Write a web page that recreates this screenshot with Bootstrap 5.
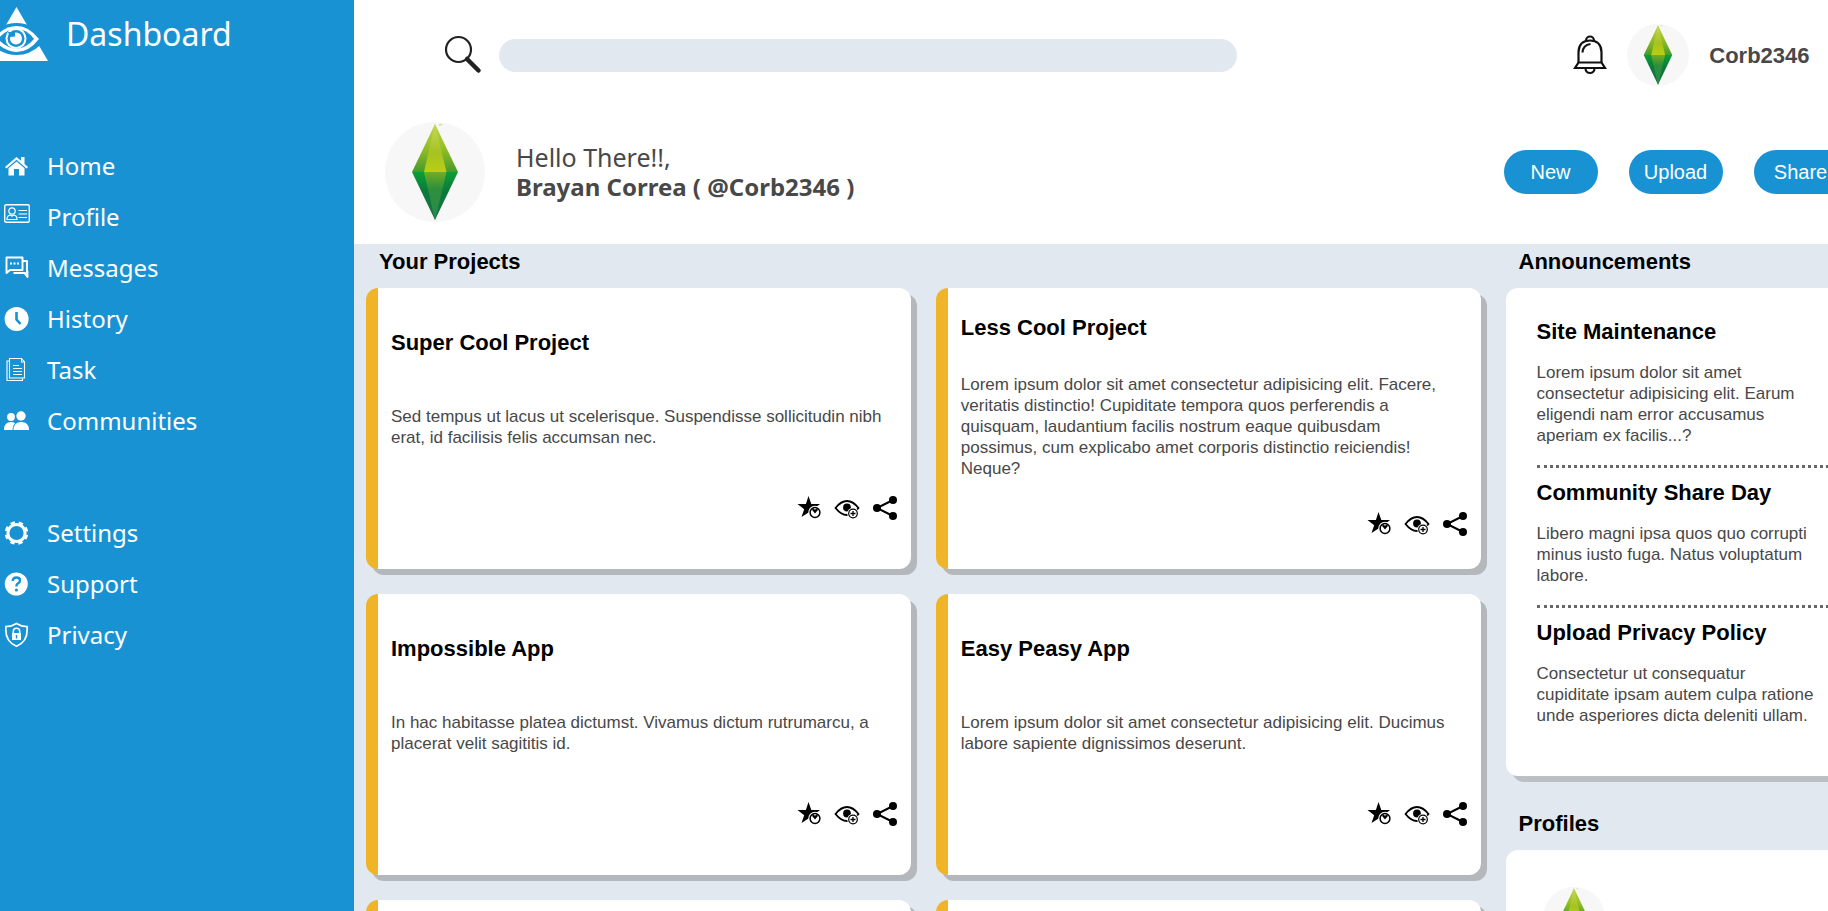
<!DOCTYPE html>
<html lang="en">
<head>
<meta charset="utf-8">
<meta name="viewport" content="width=device-width, initial-scale=1">
<title>Dashboard</title>
<link href="https://cdn.jsdelivr.net/npm/bootstrap@5.3.0/dist/css/bootstrap.min.css" rel="stylesheet">
<style>
:root { --brand: #1992d4; --page: #e1e8ef; --accent: #f0b429; --ink: #484848; }
body { font-family: "Liberation Sans", Arial, sans-serif; font-size: 17px; line-height: 21px; color: var(--ink); background: var(--page); }
h2, h3 { font-size: 22px; line-height: 25px; font-weight: 700; color: #000; margin: 0; }
.shell { width: 102%; }
.sidebar { flex: 0 0 354px; background: var(--brand); font-family: "Noto Sans", sans-serif; }
.sidebar a { color: #fff; text-decoration: none; }
.brand { padding-top: 7px; gap: 18px; font-size: 32px; line-height: 54px; }
.brand svg { width: 64px; height: 54px; margin-left: -16px; }
.menu { margin-top: 79px; font-size: 24px; }
.menu + .menu { margin-top: 61px; }
.menu a { height: 51px; padding-left: 4px; gap: 17px; }
.menu svg { width: 26px; height: 26px; }
.topline { height: 110px; padding-left: 89px; padding-right: 55px; }
.topline .glass { width: 40px; height: 40px; margin-right: 16px; }
.search-box { width: 54%; height: 33px; border-radius: 17px; background: var(--page); border: 0; }
.search-box:focus { background: var(--page); }
.bell { width: 34px; height: 40px; }
.user-name { font-size: 22px; line-height: 25px; }
.avatar { width: 62px; height: 62px; }
.avatar-lg { width: 100px; height: 100px; }
.hello { height: 134px; padding: 0 17px 10px 31px; }
.greeting { margin-left: 31px; line-height: 29px; font-size: 24px; font-family: "Noto Sans", sans-serif; }
.greeting .hi { font-size: 25px; }
.actions { gap: 31px; }
.pill { width: 94px; height: 44px; padding: 0; border: 0; border-radius: 22px; background: var(--brand); color: #fff; font-size: 20px; }
.pill:hover { background: #127fbf; color: #fff; }
.content { padding: 0 12px; gap: 25px; }
.section-title { height: 44px; padding: 5px 13px 0; }
.projects { display: grid; grid-template-columns: 1fr 1fr; grid-auto-rows: 281px; gap: 25px; }
.panel { background: #fff; border-radius: 12px; box-shadow: 6px 6px 0 #bcc0c5; }
.project { border-left: 12px solid var(--accent); padding: 0 13px; box-shadow: 6px 6px 0 #b4b7bb; }
.project h3 { margin-bottom: 8px; }
.project p { padding-right: 10px; }
.tools { height: 37px; gap: 12px; }
.tools svg { width: 26px; height: 26px; display: block; }
.rail { flex: 0 0 347px; }
.news { padding: 31px; }
.news p { margin: 18px 0 0; padding-bottom: 19px; max-width: 280px; }
.news article + article { border-top: 3px dotted #666; padding-top: 12px; }
.news article { margin-right: -20px; }
.people { padding: 37px; }
.people-title { margin-top: 30px; }
</style>
</head>
<body>
<svg width="0" height="0" class="position-absolute" aria-hidden="true">
  <defs>
    <linearGradient id="g-top" x1="0" y1="0" x2="0" y2="1"><stop offset="0" stop-color="#c3d53c"/><stop offset=".55" stop-color="#8fbb25"/><stop offset="1" stop-color="#459a2c"/></linearGradient>
    <linearGradient id="g-mid" x1="0" y1="0" x2="0" y2="1"><stop offset="0" stop-color="#c8d75f"/><stop offset=".6" stop-color="#a5c321"/><stop offset="1" stop-color="#b9cf14"/></linearGradient>
    <linearGradient id="g-low" x1="0" y1="0" x2="0" y2="1"><stop offset="0" stop-color="#0a9f38"/><stop offset=".4" stop-color="#0b7a3b"/><stop offset="1" stop-color="#177348"/></linearGradient>
    <linearGradient id="g-low-mid" x1="0" y1="0" x2="0" y2="1"><stop offset="0" stop-color="#72ad22"/><stop offset=".35" stop-color="#2d8f3c"/><stop offset="1" stop-color="#29894f"/></linearGradient>
  </defs>
  <symbol id="gem" viewBox="0 0 100 100">
    <circle cx="50" cy="50" r="50" fill="#f7f7f7"/>
    <path d="M50 2 73 50H27Z" fill="url(#g-top)"/>
    <path d="M50 2 61.500 50H39Z" fill="url(#g-mid)"/>
    <path d="M27 50H73L50 98Z" fill="url(#g-low)"/>
    <path d="M39 50H61.500L50 98Z" fill="url(#g-low-mid)"/>
    <path d="M54 3q2-1 3 0" stroke="#d5de8a" stroke-width="1.500" fill="none"/>
  </symbol>
  <symbol id="star" viewBox="0 0 26 26">
    <path d="M12.500 1 15.300 9H24L17 14.500 19.500 22 12.500 17.500 5.500 22 8.200 14.300 1.500 9H9.900Z"/>
    <circle cx="19" cy="17.500" r="6.700" fill="#fff"/>
    <circle cx="19" cy="17.500" r="4.900" fill="none" stroke="#000" stroke-width="1.500"/>
    <path d="M19 18.500 16.300 15.300V13.500h1.600L19 15 20.100 13.500h1.600v1.800Z"/>
  </symbol>
  <symbol id="watch" viewBox="0 0 26 26">
    <path d="M1.500 13Q7 6 13 6T24.500 13Q19 20 13 20T1.500 13Z" fill="none" stroke="#000" stroke-width="1.800"/>
    <circle cx="13" cy="12.500" r="3.900"/>
    <circle cx="19" cy="18.500" r="5.800" fill="#fff"/>
    <circle cx="19" cy="18.500" r="4.300" fill="none" stroke="#000" stroke-width="1.200"/>
    <path d="M19 16v5M16.500 18.500h5" stroke="#000" stroke-width="1.300"/>
  </symbol>
  <symbol id="share" viewBox="0 0 26 26">
    <path d="M21 5 5 13 21 21" fill="none" stroke="#000" stroke-width="2"/>
    <circle cx="5" cy="13" r="4"/><circle cx="21" cy="5" r="4"/><circle cx="21" cy="21" r="4"/>
  </symbol>
</svg>

<div class="vh-100 overflow-hidden">
<div class="shell d-flex min-vh-100">
  <nav class="sidebar" aria-label="Main">
    <a href="#" class="brand d-flex align-items-center">
      <svg viewBox="0 0 64 54" fill="#fff" aria-hidden="true">
        <path d="M32.500 0 64 54H1Z"/>
        <path d="M2 32Q15 16 32.500 16T62 32L56.500 38Q46 48 32.500 48T8 38Z" fill="#1992d4"/>
        <path d="M9 32Q20 19 32.500 19T55 32Q45 45 32.500 45T9 32Z"/>
        <path d="M14 32Q22 22 32.500 22T50 32Q42 41.500 32.500 41.500T14 32Z" fill="#1992d4"/>
        <circle cx="32" cy="31.500" r="10.500"/>
        <circle cx="32" cy="31.500" r="8.500" fill="#1992d4"/>
        <circle cx="32" cy="31.500" r="6"/>
        <path d="M24 25h7v4.500l-5 .5Z" fill="#1992d4"/>
      </svg>
      <span>Dashboard</span>
    </a>
    <div class="menu">
      <a href="#" class="d-flex align-items-center"><svg viewBox="0 0 26 26" fill="#fff"><path d="M12.500 4 1 14l1.500 1.500 10-8.700 10 8.700L24 14l-3.500-3V4H17v3.800Z"/><path d="M12.500 8.500 4.500 15.300V22.500H10V16h5v6.500h5.500V15.300Z"/></svg>Home</a>
      <a href="#" class="d-flex align-items-center"><svg class="overflow-visible" viewBox="0 0 26 26" fill="none" stroke="#fff"><rect x=".7" y=".7" width="24.600" height="17.500" rx="1.500" stroke-width="1.400"/><circle cx="8" cy="7" r="3.200" stroke-width="1.200"/><path d="M3 15.500q0-4 3-4.500l2 1 2-1q3 .5 3 4.500Z" stroke-width="1.200"/><path d="M14.500 6.500h8.500M14.500 10h8.500M14.500 13.500h8.500"/></svg>Profile</a>
      <a href="#" class="d-flex align-items-center"><svg viewBox="0 0 26 26" fill="none" stroke="#fff" stroke-width="1.900" stroke-linejoin="round"><path d="M2.500 2.500h16v12.500H6L2.500 18Z"/><path d="M18.500 6h4.500V20.500L20.500 18H9.500"/><path d="M20.500 17.500 23.500 22v-6"/><path d="M6 8.500h2M9.500 8.500h2M13 8.500h2"/></svg>Messages</a>
      <a href="#" class="d-flex align-items-center"><svg viewBox="0 0 26 26" fill="#fff"><circle cx="12.600" cy="13" r="12"/><path d="M12.500 6v7.500l4 4.500" fill="none" stroke="#1992d4" stroke-width="2.600"/></svg>History</a>
      <a href="#" class="d-flex align-items-center"><svg viewBox="0 0 26 26" fill="none" stroke="#fff" stroke-width="1.100"><path d="M5.500 1.500h12l3 3.500V21h-15Z"/><path d="M17.500 1.500V5h3" /><path d="M5 4H3v19.500h15.500V21.500"/><path d="M9 8.500h6M9 11.500h9M9 14.500h9M9 17.500h9"/></svg>Task</a>
      <a href="#" class="d-flex align-items-center"><svg viewBox="0 0 26 26" fill="#fff"><circle cx="7" cy="9" r="3.900"/><circle cx="17" cy="8" r="4.700"/><path d="M0 22q0-8 7-8 2.500 0 4 1.300Q8.500 17.500 8.500 22Z"/><path d="M9.500 22q0-8 7.700-8T25 22Z"/></svg>Communities</a>
    </div>
    <div class="menu">
      <a href="#" class="d-flex align-items-center"><svg viewBox="0 0 26 26" fill="none" stroke="#fff"><circle cx="12.500" cy="13" r="8.600" stroke-width="3"/><circle cx="12.500" cy="13" r="10.500" stroke-width="2.600" stroke-dasharray="4.400 3.847" stroke-dashoffset="-1.900"/></svg>Settings</a>
      <a href="#" class="d-flex align-items-center"><svg viewBox="0 0 26 26"><circle cx="12.300" cy="13" r="11.500" fill="#fff"/><path d="M8.800 10q0-3.500 3.600-3.500t3.600 3q0 1.700-1.900 2.800T12.400 15.500" fill="none" stroke="#1992d4" stroke-width="2.400"/><circle cx="12.400" cy="19" r="1.600" fill="#1992d4"/></svg>Support</a>
      <a href="#" class="d-flex align-items-center"><svg viewBox="0 0 26 26" fill="none" stroke="#fff"><path d="M12.500 1.500Q17.500 4.700 23 4.500 24.500 19.500 12.500 24.200.5 19.500 2 4.500 7.500 4.700 12.500 1.500Z" stroke-width="1.700"/><path d="M9.300 11.500V9.500a3.200 3.200 0 0 1 6.400 0v2" stroke-width="1.500"/><rect x="8" y="11" width="9" height="7" fill="#fff" stroke="none"/><path d="M12.500 13v3.500" stroke="#1992d4" stroke-width="1.400"/></svg>Privacy</a>
    </div>
  </nav>

  <main class="flex-grow-1">
    <header class="bg-white">
      <div class="topline d-flex align-items-center">
        <label for="q" class="d-flex"><svg class="glass" viewBox="0 0 40 40" fill="none" stroke="#222" role="img" aria-label="Search"><circle cx="15.500" cy="14.500" r="12.500" stroke-width="2.200"/><path d="M24 24 35.500 35.500" stroke-width="4.500" stroke-linecap="round"/></svg></label>
        <input id="q" type="search" class="search-box form-control">
        <div class="d-flex align-items-center ms-auto">
          <svg class="bell me-3" viewBox="0 0 34 40" fill="none" stroke="#111" stroke-width="2.200" role="img" aria-label="Notifications"><path d="M13 5.500a4 4 0 0 1 8 0"/><path d="M5.500 27.500V17Q6 5.500 17 5.500T28.500 17V27.500"/><path d="M5.500 27.500H28.500L32 33H2Z"/><path d="M12.500 33.500a4.500 4.500 0 0 0 9 0"/><path d="M9.500 17.500q.5-7.500 8-8.500"/></svg>
          <svg class="avatar ms-1" role="img" aria-label="Avatar"><use href="#gem"/></svg>
          <strong class="user-name ms-3 ps-1">Corb2346</strong>
        </div>
      </div>
      <div class="hello d-flex align-items-center">
        <svg class="avatar-lg" role="img" aria-label="Avatar"><use href="#gem"/></svg>
        <div class="greeting"><div class="hi">Hello There!!,</div><strong>Brayan Correa ( @Corb2346 )</strong></div>
        <div class="actions d-flex ms-auto">
          <button type="button" class="btn pill">New</button>
          <button type="button" class="btn pill">Upload</button>
          <button type="button" class="btn pill">Share</button>
        </div>
      </div>
    </header>

    <div class="content d-flex align-items-start">
      <section class="flex-grow-1">
        <h2 class="section-title">Your Projects</h2>
        <div class="projects">
          <article class="panel project d-flex flex-column justify-content-evenly">
            <h3>Super Cool Project</h3>
            <p class="m-0">Sed tempus ut lacus ut scelerisque. Suspendisse sollicitudin nibh erat, id facilisis felis accumsan nec.</p>
            <div class="tools d-flex align-items-center justify-content-end"><svg><use href="#star"/></svg><svg><use href="#watch"/></svg><svg><use href="#share"/></svg></div>
          </article>
          <article class="panel project d-flex flex-column justify-content-evenly">
            <h3>Less Cool Project</h3>
            <p class="m-0">Lorem ipsum dolor sit amet consectetur adipisicing elit. Facere, veritatis distinctio! Cupiditate tempora quos perferendis a quisquam, laudantium facilis nostrum eaque quibusdam possimus, cum explicabo amet corporis distinctio reiciendis! Neque?</p>
            <div class="tools d-flex align-items-center justify-content-end"><svg><use href="#star"/></svg><svg><use href="#watch"/></svg><svg><use href="#share"/></svg></div>
          </article>
          <article class="panel project d-flex flex-column justify-content-evenly">
            <h3>Impossible App</h3>
            <p class="m-0">In hac habitasse platea dictumst. Vivamus dictum rutrumarcu, a placerat velit sagititis id.</p>
            <div class="tools d-flex align-items-center justify-content-end"><svg><use href="#star"/></svg><svg><use href="#watch"/></svg><svg><use href="#share"/></svg></div>
          </article>
          <article class="panel project d-flex flex-column justify-content-evenly">
            <h3>Easy Peasy App</h3>
            <p class="m-0">Lorem ipsum dolor sit amet consectetur adipisicing elit. Ducimus labore sapiente dignissimos deserunt.</p>
            <div class="tools d-flex align-items-center justify-content-end"><svg><use href="#star"/></svg><svg><use href="#watch"/></svg><svg><use href="#share"/></svg></div>
          </article>
          <article class="panel project"></article>
          <article class="panel project"></article>
        </div>
      </section>

      <aside class="rail">
        <h2 class="section-title">Announcements</h2>
        <div class="panel news">
          <article><h3>Site Maintenance</h3><p>Lorem ipsum dolor sit amet consectetur adipisicing elit. Earum eligendi nam error accusamus aperiam ex facilis...?</p></article>
          <article><h3>Community Share Day</h3><p>Libero magni ipsa quos quo corrupti minus iusto fuga. Natus voluptatum labore.</p></article>
          <article><h3>Upload Privacy Policy</h3><p>Consectetur ut consequatur cupiditate ipsam autem culpa ratione unde asperiores dicta deleniti ullam.</p></article>
        </div>
        <h2 class="section-title people-title">Profiles</h2>
        <div class="panel people">
          <svg class="avatar" role="img" aria-label="Avatar"><use href="#gem"/></svg>
        </div>
      </aside>
    </div>
  </main>
</div>
</div>
<script src="https://cdn.jsdelivr.net/npm/bootstrap@5.3.0/dist/js/bootstrap.bundle.min.js"></script>
</body>
</html>
